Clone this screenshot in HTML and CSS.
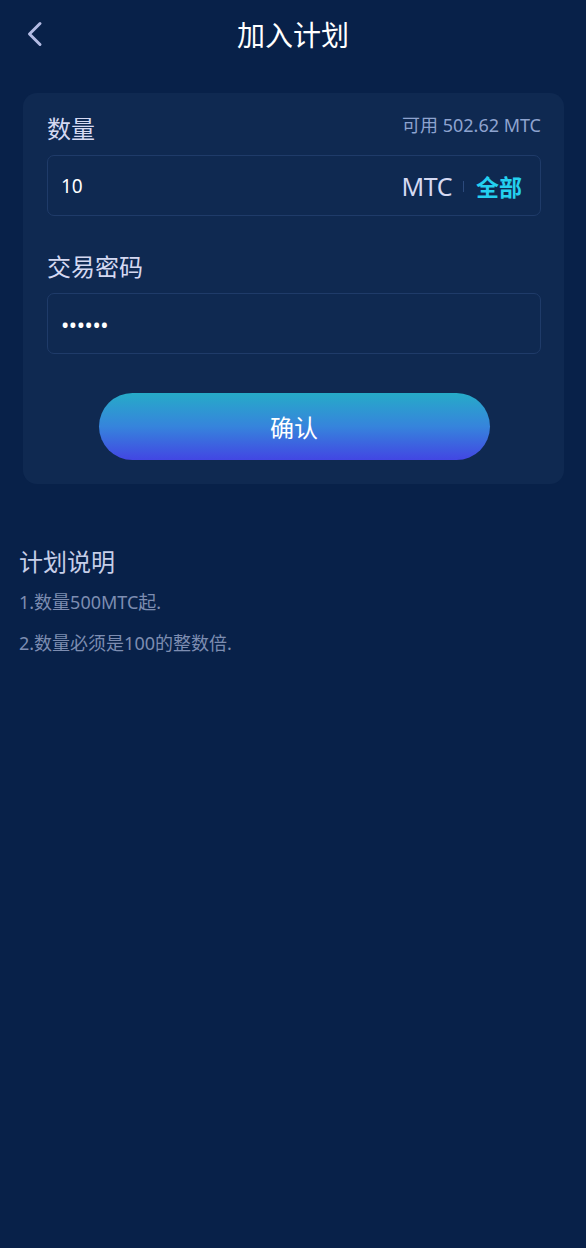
FILE: index.html
```html
<!DOCTYPE html>
<html lang="zh-CN">
<head>
<meta charset="utf-8">
<title>加入计划</title>
<link rel="stylesheet" href="styles.css">
</head>
<body>
<div class="page">
  <header class="topbar">
    <a class="back" href="#" aria-label="返回">
      <svg width="18" height="26" viewBox="0 0 18 26"><path d="M15 2.5 L4.5 13 L15 23.5" fill="none" stroke="#b3bbe3" stroke-width="3" stroke-linecap="round" stroke-linejoin="round"/></svg>
    </a>
    <h1 class="title">加入计划</h1>
  </header>

  <section class="card">
    <div class="label-row">
      <span class="label">数量</span>
      <span class="avail">可用 502.62 MTC</span>
    </div>
    <div class="field">
      <span class="value">10</span>
      <span class="unit">MTC</span>
      <span class="sep"></span>
      <span class="all">全部</span>
    </div>

    <div class="label-row second">
      <span class="label">交易密码</span>
    </div>
    <div class="field">
      <span class="dots">••••••</span>
    </div>

    <div class="btn-wrap">
      <button class="btn">确认</button>
    </div>
  </section>

  <section class="notes">
    <h2 class="notes-title">计划说明</h2>
    <p class="note">1.数量500MTC起.</p>
    <p class="note">2.数量必须是100的整数倍.</p>
  </section>
</div>
</body>
</html>
```

FILE: styles.css
```css
* { box-sizing: border-box; }
html, body {
  margin: 0;
  padding: 0;
  background: #082149;
}
body {
  font-family: "Noto Sans", "Noto Sans CJK SC", sans-serif;
  color: #d5d9f2;
  min-height: 1248px;
}
.page {
  width: 586px;
  padding-bottom: 40px;
}
.topbar {
  position: relative;
  height: 68px;
  display: flex;
  align-items: center;
  justify-content: center;
}
.back {
  position: absolute;
  left: 25px;
  top: 21px;
  display: block;
  width: 18px;
  height: 26px;
}
.back svg { display: block; }
.title {
  margin: 0;
  font-size: 28px;
  font-weight: 400;
  color: #ffffff;
  line-height: 36px;
  font-family: "Noto Sans CJK SC", sans-serif;
}
.card {
  margin: 25px 22px 0 23px;
  background: #0f2951;
  border-radius: 14px;
  padding: 20px 23px 24px 24px;
}
.label-row {
  display: flex;
  align-items: center;
  justify-content: space-between;
  height: 30px;
  margin-bottom: 12px;
}
.label-row.second {
  margin-top: 35px;
  margin-bottom: 12px;
}
.label {
  font-family: "Noto Sans CJK SC", sans-serif;
  font-size: 24px;
  line-height: 30px;
  color: #d5d9f2;
}
.avail {
  font-size: 18px;
  color: #8ea3cf;
  line-height: 24px;
  margin-top: -6px;
}
.field {
  height: 61px;
  border: 1px solid #1f3b69;
  border-radius: 7px;
  display: flex;
  align-items: center;
  padding: 0 18px 0 13px;
}
.value {
  flex: 1;
  font-size: 19px;
  color: #ffffff;
}
.unit {
  font-size: 25px;
  color: #d5d9f2;
  letter-spacing: -0.5px;
}
.sep {
  width: 1px;
  height: 11px;
  background: #2c4a7c;
  margin: 2px 12px 0 11px;
}
.all {
  font-family: "Noto Sans CJK SC", sans-serif;
  font-size: 23px;
  font-weight: 700;
  color: #24d0f0;
}
.dots {
  font-size: 22px;
  color: #ffffff;
  letter-spacing: -0.4px;
}
.btn-wrap {
  display: flex;
  justify-content: center;
  margin-top: 39px;
}
.btn {
  width: 391px;
  height: 67px;
  border: none;
  border-radius: 34px;
  background: linear-gradient(180deg, #26abc8 0%, #3684dc 50%, #4246e3 100%);
  color: #ffffff;
  font-family: "Noto Sans CJK SC", sans-serif;
  font-size: 24px;
  padding: 0;
  cursor: pointer;
}
.notes {
  padding: 0 19px;
  margin-top: 62px;
}
.notes-title {
  margin: 0 0 14px 0;
  font-family: "Noto Sans CJK SC", sans-serif;
  font-size: 24px;
  font-weight: 400;
  line-height: 30px;
  color: #c6cee8;
}
.note {
  margin: 0 0 17px 0;
  font-size: 18px;
  line-height: 24px;
  color: #7d8db1;
}
```
